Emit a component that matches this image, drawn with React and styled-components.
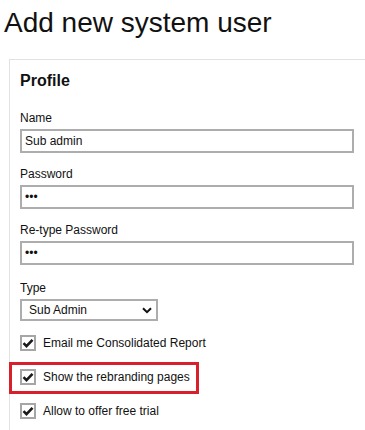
import React from 'react';
import styled, { createGlobalStyle } from 'styled-components';

const GlobalStyle = createGlobalStyle`
  html, body {
    margin: 0;
    padding: 0;
    background: #fff;
    overflow: hidden;
  }
  body {
    font-family: "Liberation Sans", Arial, sans-serif;
    color: #111;
  }
`;

const Page = styled.div`
  width: 365px;
  height: 430px;
  overflow: hidden;
`;

const Title = styled.h1`
  margin: 7px 0 20px 4px;
  font-size: 28px;
  line-height: 32px;
  font-weight: normal;
  color: #111;
`;

const Panel = styled.section`
  width: 400px;
  margin-left: 9px;
  padding: 12px 0 60px 10px;
  border: 1px solid #e2e2e2;
`;

const PanelTitle = styled.h2`
  margin: 0 0 21px;
  font-size: 16px;
  line-height: 18px;
  font-weight: bold;
  color: #111;
`;

const Field = styled.div`
  display: flex;
  flex-direction: column;
  align-items: flex-start;
  margin-bottom: ${(p) => p.$gap ?? 14}px;
`;

const Label = styled.label`
  font-size: 12px;
  line-height: 14px;
  margin-bottom: 4px;
  color: #111;
`;

const TextInput = styled.input`
  box-sizing: border-box;
  width: 334px;
  height: 24px;
  padding: 0 3px;
  border: 2px solid #adadad;
  border-radius: 0;
  font-family: "Liberation Sans", Arial, sans-serif;
  font-size: 12px;
  color: #111;
  background: #fff;
  outline: none;
`;

const SelectWrap = styled.div`
  position: relative;
  width: 138px;
  height: 22px;
`;

const Select = styled.select`
  box-sizing: border-box;
  appearance: none;
  -webkit-appearance: none;
  width: 100%;
  height: 100%;
  padding: 0 0 0 7px;
  border: 2px solid #adadad;
  border-radius: 0;
  background: #fff;
  font-family: "Liberation Sans", Arial, sans-serif;
  font-size: 12px;
  color: #111;
  outline: none;
`;

const Chevron = styled.svg`
  position: absolute;
  right: 6px;
  top: 8px;
  pointer-events: none;
`;

const CheckList = styled.div`
  display: flex;
  flex-direction: column;
  gap: 18px;
  margin-top: 14px;
`;

const CheckRow = styled.label`
  position: relative;
  display: flex;
  align-items: center;
  gap: 7px;
  width: fit-content;
  height: 16px;
  font-size: 12px;
  color: #111;

  ${(p) =>
    p.$highlight &&
    `
    &::after {
      content: '';
      position: absolute;
      top: -7px;
      bottom: -9px;
      left: -11px;
      right: -9px;
      border: 3px solid #d7202c;
      pointer-events: none;
    }
  `}
`;

const Box = styled.span`
  box-sizing: border-box;
  width: 16px;
  height: 16px;
  border: 2px solid #a6a6a6;
  background: #fff;
  display: flex;
  align-items: center;
  justify-content: center;
`;

function Check({ children, highlight }) {
  return (
    <CheckRow $highlight={highlight}>
      <Box>
        <svg width="12" height="12" viewBox="0 0 12 12">
          <polyline
            points="1.5,6.2 4.5,9.2 10.5,2.8"
            fill="none"
            stroke="#1a1a1a"
            strokeWidth="2.6"
          />
        </svg>
      </Box>
      {children}
    </CheckRow>
  );
}

export default function App() {
  return (
    <Page>
      <GlobalStyle />
      <Title>Add new system user</Title>
      <Panel>
        <PanelTitle>Profile</PanelTitle>

        <Field>
          <Label>Name</Label>
          <TextInput type="text" defaultValue="Sub admin" />
        </Field>
        <Field>
          <Label>Password</Label>
          <TextInput type="password" defaultValue="abc" />
        </Field>
        <Field $gap={16}>
          <Label>Re-type Password</Label>
          <TextInput type="password" defaultValue="abc" />
        </Field>
        <Field $gap={0}>
          <Label>Type</Label>
          <SelectWrap>
            <Select defaultValue="sub">
              <option value="sub">Sub Admin</option>
              <option value="admin">Admin</option>
            </Select>
            <Chevron width="10" height="7" viewBox="0 0 10 7">
              <polyline points="1,1.2 5,5.2 9,1.2" fill="none" stroke="#111" strokeWidth="2" />
            </Chevron>
          </SelectWrap>
        </Field>

        <CheckList>
          <Check>Email me Consolidated Report</Check>
          <Check highlight>Show the rebranding pages</Check>
          <Check>Allow to offer free trial</Check>
        </CheckList>
      </Panel>
    </Page>
  );
}
